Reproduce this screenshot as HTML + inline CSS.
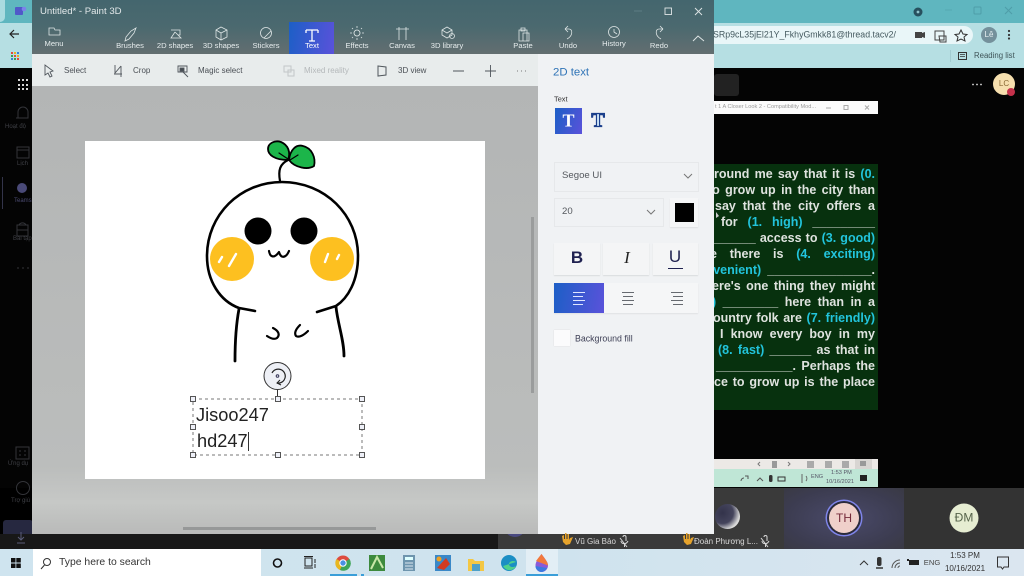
<!DOCTYPE html>
<html><head><meta charset="utf-8"><style>
html,body{margin:0;padding:0;width:1024px;height:576px;overflow:hidden;background:#000;font-family:"Liberation Sans","Noto Sans CJK SC",sans-serif}
.b{position:absolute}
.t{position:absolute;white-space:nowrap;line-height:1;transform:translateY(-50%)}
.c{transform:translate(-50%,-50%)}
.r{color:#e6eced;font-size:7.6px}
.s{color:#4a4f55;font-size:8px}
.l{position:absolute;height:16px;white-space:nowrap;font:bold 12.5px/16px "Liberation Sans",sans-serif;color:#dfe3df;text-align:justify;text-align-last:justify}
.l i{font-style:normal;color:#22c4dc}
</style></head><body>
<!-- browser backdrop -->
<div class="b" style="left:0;top:0;width:1024px;height:23px;background:#5fb6bf"></div>
<div class="b" style="left:0;top:23px;width:1024px;height:45px;background:#b6dfe3"></div>
<div class="b" style="left:0;top:0;width:5px;height:22px;background:#a9dbe0;border-radius:0 0 6px 0"></div>
<div class="b" style="left:714px;top:26px;width:259px;height:18px;background:#e9f6f8;border-radius:0 9px 9px 0"></div>
<div class="b" style="left:0;top:68px;width:1024px;height:420px;background:#040404"></div>
<div class="b" style="left:714px;top:74px;width:25px;height:22px;background:#222;border-radius:3px"></div>
<div class="t" style="left:713px;top:35px;font-size:8.8px;color:#44595f">SRp9cL35jEl21Y_FkhyGmkk81@thread.tacv2/</div>
<div class="t" style="left:974px;top:56px;font-size:7.8px;color:#3f5458">Reading list</div>
<div class="t c" style="left:989px;top:35px;width:16px;height:16px;line-height:16px;border-radius:50%;background:#74909b;color:#e6eef0;text-align:center;font-size:8px;transform:translate(-50%,-50%)">Lê</div>
<div class="t c" style="left:1004px;top:84px;width:22px;height:22px;line-height:22px;border-radius:50%;background:#f6dfae;color:#8a6a35;text-align:center;font-size:8px">LC</div>
<div class="b" style="left:1007px;top:88px;width:8px;height:8px;border-radius:50%;background:#c4314b"></div>
<div class="t" style="left:5px;top:127px;font-size:6px;color:#3f4046">Hoạt độ</div>
<div class="t" style="left:17px;top:164px;font-size:6px;color:#3f4046">Lịch</div>
<div class="t" style="left:14px;top:201px;font-size:6px;color:#4a4a70">Teams</div>
<div class="t" style="left:13px;top:239px;font-size:6px;color:#3f4046">Bài tập</div>
<div class="t" style="left:8px;top:464px;font-size:6px;color:#3f4046">Ứng dụ</div>
<div class="t" style="left:11px;top:501px;font-size:6px;color:#3f4046">Trợ giú</div>
<div class="b" style="left:3px;top:520px;width:30px;height:25px;background:#262840;border-radius:3px"></div>
<!-- slide window -->
<div class="b" style="left:714px;top:101px;width:164px;height:13px;background:#fbfbfb"></div>
<div class="t" style="left:715px;top:108px;font-size:5.6px;color:#9a9a9a">t 1 A Closer Look 2 - Compatibility Mod...</div>
<div class="b" style="left:714px;top:164px;width:164px;height:246px;background:#07310e;overflow:hidden" id="sl">
<div class="l" style="top:2px;left:-9px;width:170px">Around me say that it is <i>(0.</i></div>
<div class="l" style="top:18px;left:-6px;width:167px">to grow up in the city than</div>
<div class="l" style="top:34px;left:1px;width:160px">say that the city offers a</div>
<div class="l" style="top:50px;left:7px;width:154px">for <i>(1. high)</i> _________</div>
<div class="l" style="top:66px;left:0;width:161px">______ access to <i>(3. good)</i></div>
<div class="l" style="top:82px;left:-4px;width:165px">e there is <i>(4. exciting)</i></div>
<div class="l" style="top:98px;left:-23px;width:184px"><i>convenient)</i> _______________.</div>
<div class="l" style="top:114px;left:-2px;width:163px">ere's one thing they might</div>
<div class="l" style="top:130px;left:-2px;width:163px"><i>)</i> ________ here than in a</div>
<div class="l" style="top:146px;left:-8px;width:169px">country folk are <i>(7. friendly)</i></div>
<div class="l" style="top:162px;left:6px;width:155px">I know every boy in my</div>
<div class="l" style="top:178px;left:4px;width:157px"><i>(8. fast)</i> ______ as that in</div>
<div class="l" style="top:194px;left:2px;width:159px">___________. Perhaps the</div>
<div class="l" style="top:210px;left:0;width:161px">ce to grow up is the place</div>
</div>
<!-- slide bottom bars -->
<div class="b" style="left:714px;top:459px;width:164px;height:10px;background:#ece9e6"></div>
<div class="b" style="left:714px;top:469px;width:164px;height:18px;background:#bfe6d6"></div>
<div class="t" style="left:831px;top:474px;font-size:5.6px;color:#556">1:53 PM</div>
<div class="t" style="left:826px;top:483px;font-size:5.6px;color:#556">10/16/2021</div>
<div class="t" style="left:811px;top:478px;font-size:5.6px;color:#556">ENG</div>
<!-- tiles -->
<div class="b" style="left:0;top:534px;width:500px;height:15px;background:#181818"></div>
<div class="b" style="left:498px;top:488px;width:526px;height:61px;background:#3a3a3a"></div>
<div class="b" style="left:784px;top:488px;width:120px;height:61px;background:radial-gradient(ellipse at 50% 50%,#4a4a6a 0,#3c3c50 70%,#3a3a44 100%)"></div>
<div class="b" style="left:904px;top:488px;width:120px;height:61px;background:#333"></div>
<div class="b" style="left:504px;top:522px;width:22px;height:15px;border-radius:0 0 11px 11px;background:#4a4a80"></div>
<div class="b" style="left:715px;top:504px;width:25px;height:25px;border-radius:50%;background:radial-gradient(circle at 30% 35%,#33334a 0,#44445c 45%,#d8d8d8 72%,#eee 100%)"></div>
<div class="t c" style="left:844px;top:518px;width:30px;height:30px;line-height:30px;border-radius:50%;background:#efd0ca;color:#742a3a;text-align:center;font-size:12px;box-shadow:0 0 0 2px #2b2b3c,0 0 0 3.5px #7f85ea">TH</div>
<div class="t c" style="left:964px;top:518px;width:29px;height:29px;line-height:29px;border-radius:50%;background:#e6edd2;color:#55634a;text-align:center;font-size:12px">ĐM</div>
<div class="t" style="left:575px;top:542px;font-size:8px;color:#d8d8d8">Vũ Gia Bảo</div>
<div class="t" style="left:694px;top:542px;font-size:8px;color:#d8d8d8">Đoàn Phương L...</div>
<!-- paint 3d -->
<div class="b" style="left:32px;top:0;width:682px;height:54px;background:linear-gradient(180deg,#44666e 0,#4b696f 50%,#636e70 100%)"></div>
<div class="b" style="left:289px;top:22px;width:45px;height:32px;background:linear-gradient(100deg,#1c5fc6,#5a52da)"></div>
<div class="b" style="left:32px;top:54px;width:506px;height:32px;background:#e8ecec"></div>
<div class="b" style="left:32px;top:86px;width:506px;height:448px;background:linear-gradient(180deg,#b3b5b5 0,#bbbdbc 85%,#c6c8c6 93%,#b9bab9 100%)"></div>
<div class="b" style="left:85px;top:141px;width:400px;height:338px;background:#fff"></div>
<div class="b" style="left:531px;top:217px;width:3px;height:176px;background:#9a9c9c"></div>
<div class="b" style="left:183px;top:527px;width:193px;height:3px;background:#969898"></div>
<div class="b" style="left:538px;top:54px;width:176px;height:480px;background:#f0f2f4"></div>
<!-- ribbon text -->
<div class="t" style="left:40px;top:12px;font-size:9.6px;color:#e2e8e9">Untitled* - Paint 3D</div>
<div class="t c r" style="left:54px;top:44px">Menu</div>
<div class="t c r" style="left:130px;top:46px">Brushes</div>
<div class="t c r" style="left:175px;top:46px">2D shapes</div>
<div class="t c r" style="left:221px;top:46px">3D shapes</div>
<div class="t c r" style="left:266px;top:46px">Stickers</div>
<div class="t c r" style="left:312px;top:46px;color:#fff">Text</div>
<div class="t c r" style="left:357px;top:46px">Effects</div>
<div class="t c r" style="left:402px;top:46px">Canvas</div>
<div class="t c r" style="left:447px;top:46px">3D library</div>
<div class="t c r" style="left:523px;top:46px">Paste</div>
<div class="t c r" style="left:568px;top:46px">Undo</div>
<div class="t c r" style="left:614px;top:44px">History</div>
<div class="t c r" style="left:659px;top:46px">Redo</div>
<div class="t s" style="left:64px;top:71px">Select</div>
<div class="t s" style="left:133px;top:71px">Crop</div>
<div class="t s" style="left:198px;top:71px">Magic select</div>
<div class="t s" style="left:304px;top:71px;color:#b4b8ba">Mixed reality</div>
<div class="t s" style="left:398px;top:71px">3D view</div>
<!-- panel -->
<div class="t" style="left:553px;top:73px;font-size:11.4px;color:#2e73b6">2D text</div>
<div class="t" style="left:554px;top:99px;font-size:7.4px;color:#333">Text</div>
<div class="b" style="left:555px;top:108px;width:27px;height:26px;background:linear-gradient(110deg,#1c5fc6,#5a52da)"></div>
<div class="t c" style="left:568.5px;top:121px;font:bold 18px 'Liberation Serif',serif;color:#fff">T</div>
<div class="t c" style="left:598px;top:121px;font:bold 20px 'Liberation Serif',serif;color:#cfe6fa;-webkit-text-stroke:1.2px #1b3f8b">T</div>
<div class="b" style="left:554px;top:162px;width:143px;height:28px;border:1px solid #e6e8ea"></div>
<div class="t" style="left:562px;top:176px;font-size:9.6px;color:#55595e">Segoe UI</div>
<div class="b" style="left:554px;top:198px;width:108px;height:27px;border:1px solid #e6e8ea"></div>
<div class="t" style="left:562px;top:212px;font-size:9.6px;color:#55595e">20</div>
<div class="b" style="left:670px;top:198px;width:28px;height:29px;background:#f5f6f7;box-shadow:0 1px 1px #dfe1e3"></div>
<div class="b" style="left:675px;top:203px;width:19px;height:19px;background:#000"></div>
<div class="b" style="left:554px;top:243px;width:46px;height:32px;background:#f4f5f6;box-shadow:0 1px 1px #d9dbdd"></div>
<div class="b" style="left:603px;top:243px;width:46px;height:32px;background:#f4f5f6;box-shadow:0 1px 1px #d9dbdd"></div>
<div class="b" style="left:653px;top:243px;width:45px;height:32px;background:#f4f5f6;box-shadow:0 1px 1px #d9dbdd"></div>
<div class="t c" style="left:577px;top:258px;font:bold 17px 'Liberation Sans',sans-serif;color:#1f2150">B</div>
<div class="t c" style="left:627px;top:258px;font:italic 17px 'Liberation Serif',serif;color:#222">I</div>
<div class="t c" style="left:675px;top:257px;font:17px 'Liberation Sans',sans-serif;color:#1f2150">U</div>
<div class="b" style="left:668px;top:268px;width:15px;height:1px;background:#1f2150"></div>
<div class="b" style="left:554px;top:283px;width:144px;height:30px;background:#f5f6f7;box-shadow:0 1px 1px #e0e2e4"></div>
<div class="b" style="left:554px;top:283px;width:50px;height:30px;background:linear-gradient(100deg,#1c5fc6,#5a52da)"></div>
<div class="b" style="left:554px;top:330px;width:16px;height:16px;background:#fbfbfc;box-shadow:0 0 1px #cfd1d3"></div>
<div class="t" style="left:575px;top:338.5px;font-size:8.8px;color:#3d3f55">Background fill</div>
<!-- canvas text -->
<div class="t" style="left:196px;top:415px;font-size:18.2px;color:#222">Jisoo247</div>
<div class="t" style="left:197px;top:441px;font-size:18.2px;color:#222">hd247</div>
<!-- taskbar -->
<div class="b" style="left:0;top:549px;width:1024px;height:27px;background:linear-gradient(90deg,#cfe4ef 0,#cfe3ee 55%,#dbe6f0 100%)"></div>
<div class="b" style="left:33px;top:549px;width:228px;height:27px;background:#fff"></div>
<div class="b" style="left:526px;top:549px;width:32px;height:27px;background:#e2eef5"></div>
<div class="t" style="left:59px;top:563px;font-size:10.4px;color:#333">Type here to search</div>
<div class="t" style="left:932px;top:563px;font-size:7.6px;color:#444;transform:translate(-50%,-50%)">ENG</div>
<div class="t c" style="left:965px;top:556px;font-size:8px;color:#333">1:53 PM</div>
<div class="t c" style="left:965px;top:569px;font-size:8px;color:#333">10/16/2021</div>
<!-- graphics -->
<svg class="b" style="left:0;top:0" width="1024" height="576" viewBox="0 0 1024 576" fill="none">
<!-- character -->
<g stroke="#000" stroke-width="2.8" stroke-linecap="round" stroke-linejoin="round">
<circle cx="258" cy="231" r="13.5" fill="#000" stroke="none"/><circle cx="304" cy="231" r="13.5" fill="#000" stroke="none"/>
<circle cx="232" cy="259" r="22" fill="#fdc020" stroke="none"/><circle cx="332" cy="259" r="22" fill="#fdc020" stroke="none"/>
<path d="M255 311 L239 308 C220 301 207 281 207 256 C207 215 240 182 282 182 C325 182 358 215 358 256 C358 281 348 298 336 306 L317 312" stroke-width="2.6"/>
<path d="M239 309 C236 325 235 345 235 361"/><path d="M336 307 C338 325 344 340 344 356"/>
<path d="M269 251 C270 257 274 259 279 252 C281 259 286 258 289 251" stroke-width="2.2"/>
<path d="M273 328 C279 331 280 335 277 338 C274 340 270 338 267 336" stroke-width="2.2"/>
<path d="M300 325 C296 329 294 333 296 336 C299 338 304 335 308 331" stroke-width="2.2"/>
<path d="M280 181 C278 170 280 164 288 160" stroke-width="2.2"/>
<path d="M288 160 C275 160 268 155 268 149 C268 143 275 140 281 142 C288 145 291 152 288 160Z" fill="#1cb54a" stroke-width="1.8"/>
<path d="M289 160 C290 150 296 144 303 146 C312 148 316 158 314 166 C308 170 295 168 289 160Z" fill="#1cb54a" stroke-width="1.8"/>
<path d="M279 153 L288 159 M298 155 L290 160" stroke-width="1.2"/>
</g>
<g stroke="#fff" stroke-width="2.4" stroke-linecap="round">
<path d="M219 262 L222 257 M229 266 L236 254 M325 262 L328 254 M337 259 L339 255"/>
</g>
<!-- selection -->
<rect x="193" y="399" width="169" height="56" stroke="#777" stroke-width="1" stroke-dasharray="3 3"/>
<path d="M277.500 390 V399" stroke="#333"/>
<circle cx="277.500" cy="376" r="13.500" fill="#eef0f6" stroke="#333" stroke-width="1"/>
<path d="M272 373 A7 7 0 1 1 277 383" stroke="#222" stroke-width="1.200"/><path d="M280 380 L277 383 L281 385" stroke="#222" stroke-width="1"/><circle cx="277.500" cy="376" r="1.300" stroke="#335" />
<g fill="#eef0f8" stroke="#555" stroke-width="1">
<rect x="190.500" y="396.500" width="5" height="5"/><rect x="275.500" y="396.500" width="5" height="5"/><rect x="359.500" y="396.500" width="5" height="5"/>
<rect x="190.500" y="424.500" width="5" height="5"/><rect x="359.500" y="424.500" width="5" height="5"/>
<rect x="190.500" y="452.500" width="5" height="5"/><rect x="275.500" y="452.500" width="5" height="5"/><rect x="359.500" y="452.500" width="5" height="5"/>
</g>
<path d="M248.500 432 V451" stroke="#333"/>
<!-- ribbon icons -->
<g stroke="#dfe6e6" stroke-width=".8">
<path d="M49 28 H54 L55 30 H60 V35 H49Z"/>
<path d="M126 37 L131 31 L136 28 L134 33 L129 39 L125 41Z"/>
<path d="M171 30 H180 V35 H178 M175 32 L181 38 H171 L175 32"/>
<path d="M221 27 L227 30 V37 L221 40 L216 37 V30Z M216 30 L221 33 L227 30 M221 33 V40"/>
<circle cx="266" cy="33" r="5.500"/><path d="M264 38 L271 31"/>
<path d="M357 30 a3 3 0 1 0 .01 0 M357 26 V28 M357 38 V40 M350 33 H352 M362 33 H364 M352 28 L353 29 M362 28 L361 29 M352 38 L353 37 M362 38 L361 37"/>
<path d="M396 29 H409 M399 27 V40 M406 27 V40"/>
<path d="M447 27 L452 30 V35 L447 38 L442 35 V30Z M442 30 L447 33 L452 30"/><circle cx="452" cy="36" r="2.500"/>
<path d="M519 30 H527 V41 H519Z M521 28 H525 V31 H521Z M523 33 H529 V41 H523Z"/>
<path d="M565 29 L569 29 C573 29 573 36 567 39 M565 29 L568 26 M565 29 L568 32"/>
<circle cx="614" cy="32" r="5.500"/><path d="M614 29 V32 L617 34"/>
<path d="M663 29 L659 29 C655 29 655 36 661 39 M663 29 L660 26 M663 29 L660 32"/>
<path d="M693 41 L698 36 L704 41" stroke-width="1"/>
</g>
<path d="M306 30 H318 M312 30 V41 M309 41 H315 M306 30 V33 M318 30 V33" stroke="#fff" stroke-width="1.300"/>
<g stroke="#dfe5e6" stroke-width=".9"><rect x="665" y="8" width="6.500" height="6.500"/><path d="M695 8 L702 15 M702 8 L695 15"/></g>
<path d="M634 11 H642" stroke="#5d7c83"/>
<!-- browser window controls -->
<circle cx="918" cy="12" r="4.500" fill="#27505e"/><circle cx="918" cy="12" r="1.400" fill="#8fc4cc"/>
<path d="M945 10 H952" stroke="#55a8b2"/><rect x="974" y="7" width="7" height="7" rx="1" stroke="#4f9da8"/><path d="M1005 7 L1012 14 M1012 7 L1005 14" stroke="#4f9da8"/>
<path d="M950.500 50 V62" stroke="#a3cdd2"/>
<!-- toolbar icons -->
<g stroke="#50565c" stroke-width=".9">
<path d="M45 65 L45 75 L48 73 L50 77 L52 76 L50 72 L53 71Z"/>
<path d="M114 74 H122 M115 65 V73 L121 66 M121 66 V77"/>
<path d="M178 66 H187 V72 H178Z M183 72 L188 77"/><rect x="180" y="68" width="4" height="3" fill="#444a50"/>
<path d="M378 66 L386 67 V75 L378 76Z M378 66 V76" stroke-width="1"/>
<path d="M453 71 H464 M485 71 H496 M490.500 65 V77"/>
<path d="M517 71 H518 M521 71 H522 M525 71 H526" stroke="#777"/>
</g>
<path d="M284 66 H291 V72 H284Z M288 70 H294 V76 H288Z" stroke="#c2c6c8"/>
<!-- panel chevrons and align -->
<path d="M684 174 L688 178 L692 174 M647 210 L651 214 L655 210" stroke="#777"/>
<path d="M573 292.500 H585 M573 296.500 H583 M573 300.500 H585 M573 304.500 H583" stroke="#dfe6ff"/>
<path d="M622 292.500 H634 M623 296.500 H633 M622 300.500 H634 M623 304.500 H633" stroke="#666a70"/>
<path d="M671 292.500 H683 M673 296.500 H683 M671 300.500 H683 M673 304.500 H683" stroke="#666a70"/>
<!-- browser icons -->
<rect x="15" y="7" width="8" height="8" rx="1" fill="#5059c9"/><circle cx="24" cy="9" r="2.300" fill="#7b83eb"/>
<path d="M19 34 H10 M14 30 L10 34 L14 38" stroke="#222" stroke-width="1.200"/>
<g><rect x="11" y="52" width="2" height="2" fill="#e04a3a"/><rect x="14" y="52" width="2" height="2" fill="#e8b020"/><rect x="17" y="52" width="2" height="2" fill="#3a80d0"/><rect x="11" y="55" width="2" height="2" fill="#3aa050"/><rect x="14" y="55" width="2" height="2" fill="#e04a3a"/><rect x="17" y="55" width="2" height="2" fill="#e8b020"/><rect x="11" y="58" width="2" height="2" fill="#3a80d0"/><rect x="14" y="58" width="2" height="2" fill="#3aa050"/><rect x="17" y="58" width="2" height="2" fill="#e04a3a"/></g>
<g fill="#d8d8d8"><rect x="18" y="79" width="2" height="2"/><rect x="22" y="79" width="2" height="2"/><rect x="26" y="79" width="2" height="2"/><rect x="18" y="84" width="2" height="2"/><rect x="22" y="84" width="2" height="2"/><rect x="26" y="84" width="2" height="2"/><rect x="18" y="88" width="2" height="2"/><rect x="22" y="88" width="2" height="2"/><rect x="26" y="88" width="2" height="2"/></g>
<g stroke="#333439"><path d="M18 118 V112 a5 5 0 0 1 10 0 V118 H16"/><rect x="17" y="147" width="12" height="11"/><path d="M17 150 H29"/><rect x="17" y="225" width="11" height="11"/><path d="M19 225 a4 4 0 0 1 7 0 M17 230 H28"/><path d="M17 268 H19 M22 268 H24 M27 268 H29"/><rect x="16" y="447" width="13" height="12"/><path d="M19 451 H21 M24 451 H26 M19 455 H21 M24 455 H26"/><circle cx="23" cy="488" r="6.500"/></g>
<circle cx="22" cy="188" r="5" fill="#4a4a78"/><path d="M2.500 177 V209" stroke="#33344a"/>
<path d="M21 532 V540 M18 537 L21 540 L24 537 M17 543 H25" stroke="#5a5c78"/>
<rect x="915" y="32" width="7" height="6" fill="#444"/><path d="M922 33 L925 32 V38 L922 37Z" fill="#444"/>
<rect x="935" y="31" width="9" height="9" stroke="#444"/><path d="M939 36 H946 V42 H940Z" stroke="#444"/>
<path d="M961 30 L963 34 L967 34.500 L964 37 L965 41 L961 39 L957 41 L958 37 L955 34.500 L959 34Z" stroke="#333"/>
<g fill="#333"><circle cx="1009" cy="31" r="1.100"/><circle cx="1009" cy="35" r="1.100"/><circle cx="1009" cy="38.500" r="1.100"/></g>
<rect x="958.500" y="52.500" width="8" height="7" stroke="#333"/><path d="M960 54.500 H965 M960 56.500 H965" stroke="#333" stroke-width=".7"/>
<g fill="#ddd"><circle cx="973" cy="84.500" r=".9"/><circle cx="977" cy="84.500" r=".9"/><circle cx="981" cy="84.500" r=".9"/></g>
<path d="M826 108 H831" stroke="#aaa"/><rect x="844" y="105.500" width="4" height="4" stroke="#aaa"/><path d="M865 105.500 L869 109.500 M869 105.500 L865 109.500" stroke="#aaa"/>
<path d="M716 212 L716 218 L719 216Z" fill="#ccc"/>
<!-- slide status bar icons -->
<path d="M760 462 L758 464 L760 466 M788 462 L790 464 L788 466" stroke="#777"/><rect x="772" y="461" width="5" height="7" fill="#999"/><rect x="807" y="461" width="7" height="7" fill="#aaa"/><rect x="825" y="461" width="7" height="7" fill="#aaa"/><rect x="842" y="461" width="7" height="7" fill="#aaa"/><rect x="855" y="459" width="17" height="10" fill="#d8d5d2"/><rect x="860" y="461" width="6" height="5" fill="#999"/>
<path d="M757 481 L760 478 L763 481" stroke="#555"/><rect x="769" y="475" width="3.500" height="7" rx="1.500" fill="#333"/><rect x="778" y="477" width="7" height="4" stroke="#333"/><path d="M802 474 V483 M806 476 a4 4 0 0 1 0 5" stroke="#666"/><rect x="860" y="475" width="7" height="6" fill="#222"/>
<path d="M741 481 a3 3 0 0 1 3 -3 M745 476 H748 V479" stroke="#555"/>
<!-- hands and mics -->
<path d="M562 536 L563 542 L566 545 L570 544 L573 537 L570 538 L569 540 V534 H567.500 V539 H566.500 V533 H565 V539 H564 V535 Z" fill="#e6a32c"/>
<path d="M683 536 L684 542 L687 545 L691 544 L694 537 L691 538 L690 540 V534 H688.500 V539 H687.500 V533 H686 V539 H685 V535 Z" fill="#e6a32c"/>
<path d="M620 538 L627 547 M623 537 a1.500 1.500 0 0 1 3 0 V541 M621 541 C621 544 626 545 628 541 M624.500 544 V547" stroke="#d8d8d8"/>
<path d="M761 538 L768 547 M764 537 a1.500 1.500 0 0 1 3 0 V541 M762 541 C762 544 767 545 769 541 M765.500 544 V547" stroke="#d8d8d8"/>
<!-- taskbar icons -->
<g fill="#111"><rect x="11" y="558" width="4.500" height="4.500"/><rect x="16.300" y="558" width="4.500" height="4.500"/><rect x="11" y="563.500" width="4.500" height="4.500"/><rect x="16.300" y="563.500" width="4.500" height="4.500"/></g>
<circle cx="47" cy="562" r="3.500" stroke="#333"/><path d="M44.500 565 L41 569" stroke="#333"/>
<circle cx="277.500" cy="563" r="4" stroke="#111" stroke-width="1.600"/>
<path d="M305 558 H312 V566 H305Z M304 568 H313 M304 556.500 H313 M315 559 V563 M315 564 V568" stroke="#222"/>
<circle cx="343" cy="563" r="7.500" fill="#dd4b3e"/><path d="M343 563 L336.500 559 A7.500 7.500 0 0 0 340 570Z" fill="#e8b720"/><path d="M343 563 L349.500 559 A7.500 7.500 0 0 1 340 570Z" fill="#3fa556"/><circle cx="343" cy="563" r="3.200" fill="#4a90e2" stroke="#fff"/>
<rect x="369" y="555" width="16" height="16" fill="#3d8a3d"/><path d="M371 569 L377 557 L383 568" stroke="#c9e8a8" stroke-width="2"/>
<rect x="403" y="555" width="12" height="16" fill="#6e95ae"/><rect x="405" y="557" width="8" height="3" fill="#dff"/><path d="M405 563 H413 M405 566 H413 M405 569 H413" stroke="#dce8f0"/>
<rect x="435" y="555" width="16" height="16" fill="#3a88c8"/><path d="M437 568 L446 558 L450 564 L444 570Z" fill="#d33a22"/><circle cx="439" cy="559" r="2.500" fill="#f0a020"/>
<path d="M468 559 H473 L475 561 H484 V571 H468Z" fill="#f3c744"/><rect x="472" y="564" width="8" height="7" fill="#4da0c8"/>
<circle cx="509" cy="563" r="8" fill="#1b8ec4"/><path d="M503 566 C506 572 514 571 516 566 C513 568 509 567 509 564 C509 561 514 560 516 562" fill="#4fd18c"/>
<path d="M541.500 554 C538 559 535.500 562 535.500 565.500 C535.500 569 538 572 541.500 572 C545 572 548 569 548 565.500 C548 562 545 559 541.500 554Z" fill="#8a5ad8"/><path d="M541.500 554 C545 559 548 562 548 565.500 L536 561 C537.500 559 539 557 541.500 554Z" fill="#f2783c"/><path d="M535.500 566 C535.500 569 538 572 541.500 572 C544 572 546 570 547 568Z" fill="#3a7ae0"/>
<path d="M330 575 H357 M526 575 H558 M361 575 H364" stroke="#3a9ed8" stroke-width="2"/>
<path d="M860 565 L864 561 L868 565" stroke="#333"/><rect x="877" y="557" width="4.500" height="9" rx="2" fill="#333"/><path d="M876 568 H883" stroke="#333" stroke-width="1.500"/>
<path d="M892 568 a8 8 0 0 1 8 -8 M895 568 a5 5 0 0 1 5 -5 M898 568 a2 2 0 0 1 2 -2" stroke="#555"/>
<rect x="909" y="560" width="10" height="5" fill="#222"/><rect x="907" y="559" width="2" height="2" fill="#222"/>
<path d="M997.500 557 H1008.500 V567 H1004 L1002.500 569 L1001 567 H997.500Z" stroke="#333"/>
</svg>
</body></html>
